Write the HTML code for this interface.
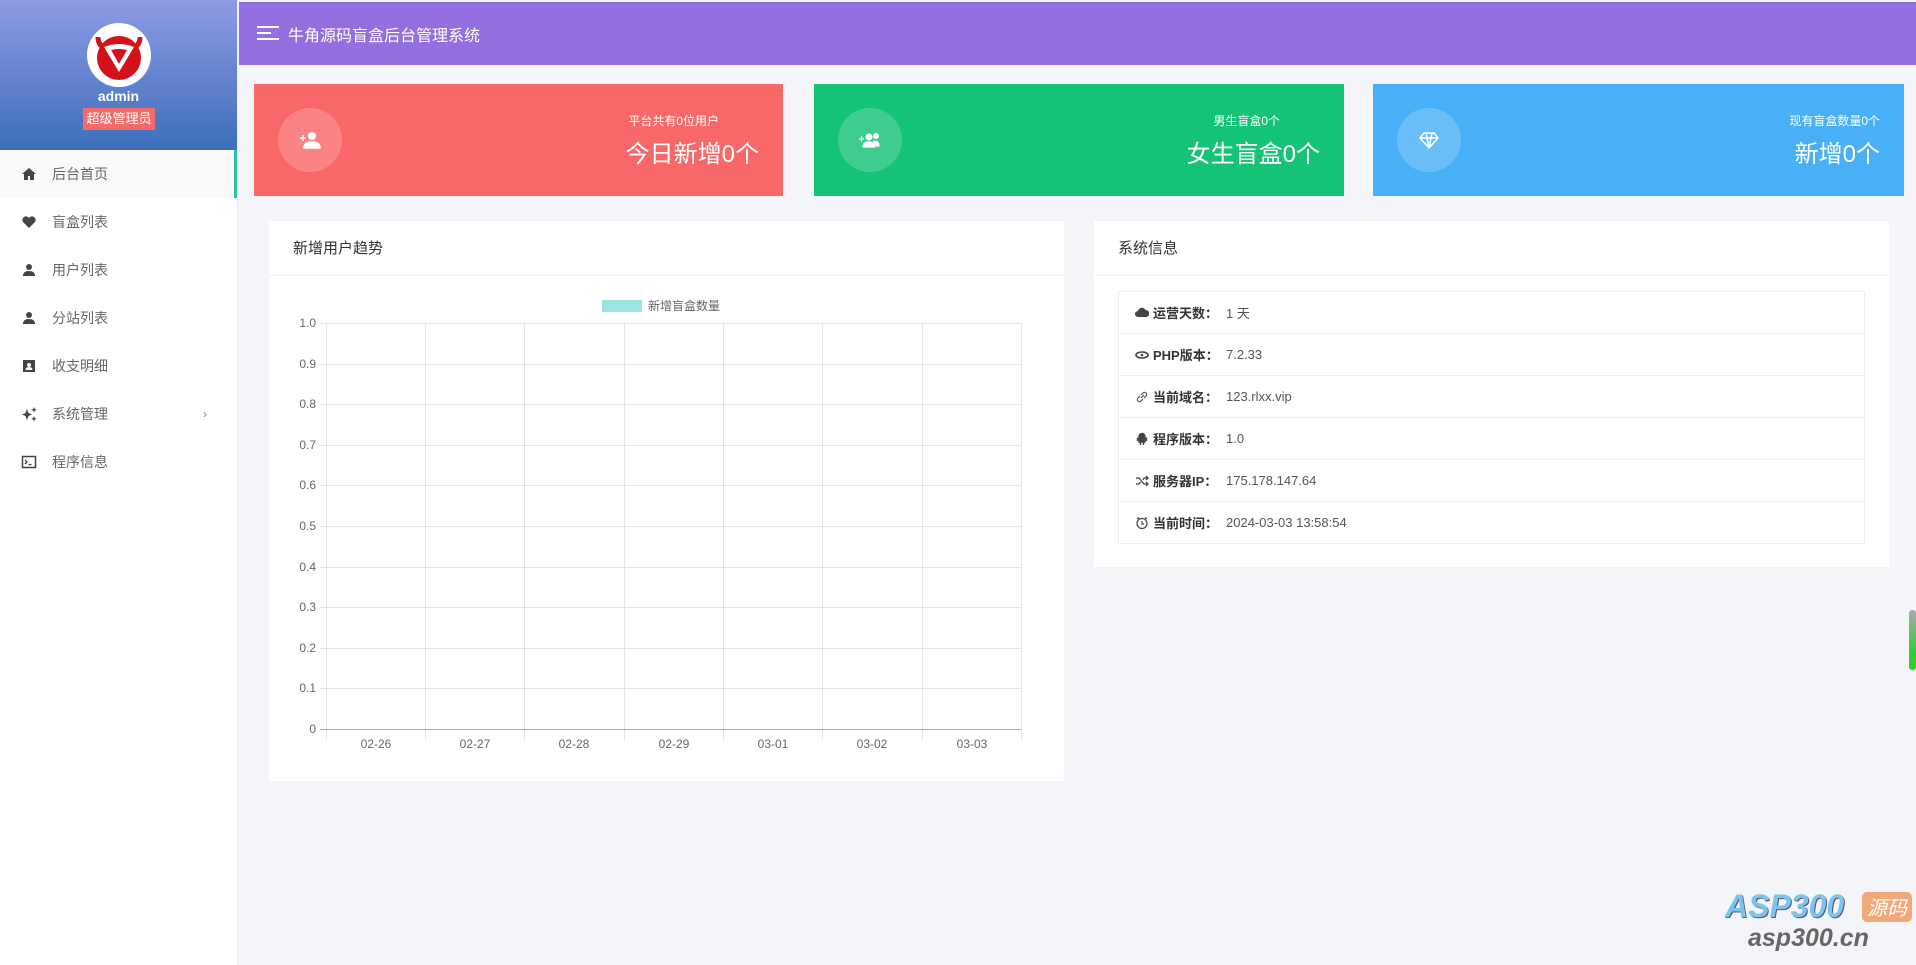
<!DOCTYPE html>
<html><head><meta charset="utf-8"><style>
*{box-sizing:border-box;margin:0;padding:0}
body{width:1916px;height:965px;overflow:hidden;background:#f4f5f9;font-family:"Liberation Sans","Noto Sans CJK SC",sans-serif;color:#333;position:relative}
.side{position:absolute;left:0;top:0;width:238px;height:965px;background:#fff;border-right:1px solid #eee}
.sh{height:150px;background:linear-gradient(#8e9ae3,#3d6fbb);text-align:center;color:#fff;position:relative}
.logo{position:absolute;left:87px;top:23px;width:64px;height:64px;border-radius:50%;background:#fff}
.uname{position:absolute;top:88px;width:100%;font-weight:bold;font-size:14px}
.role{position:absolute;left:83px;top:108px;width:72px;height:22px;background:#f36b6b;font-size:13px;line-height:22px;color:#fff}
.mi{height:48px;display:flex;align-items:center;font-size:14px;color:#666;position:relative}
.mi.act{background:#fafafa;border-right:3px solid #2bc3a3}
.mi svg{position:absolute;left:21px}
.mi span{position:absolute;left:52px}
.top{position:absolute;left:239px;top:2px;width:1677px;height:63px;background:#936fdf;color:#fff;font-size:16px}
.card{position:absolute;top:84px;height:112px;color:#fff}
.circ{position:absolute;left:24px;top:24px;width:64px;height:64px;border-radius:50%;background:rgba(255,255,255,.18)}
.ct{position:absolute;text-align:right}
.panel{position:absolute;background:#fff;top:221px}
.ph{height:55px;border-bottom:1px solid #f0f0f0;font-size:15px;line-height:55px;padding-left:24px;color:#333}
.row{height:42px;border-bottom:1px solid #eee;display:flex;align-items:center;font-size:13px;color:#555;position:relative}
.row b{position:absolute;left:34px;color:#333}
.row i{font-style:normal;position:absolute;left:107px}
.row svg{position:absolute;left:16px}
</style></head><body>
<div class="side">
 <div class="sh">
  <div class="logo"><svg width="64" height="64" viewBox="0 0 64 64"><path d="M11 14q0 10 10 12M53 14q0 10-10 12" stroke="#d3121c" stroke-width="5" fill="none"/><circle cx="32" cy="35" r="22" fill="#d3121c"/><path d="M17 24q15-6 30 0l-15 25z" fill="#fff"/><path d="M24 27q8-2 16 0l-8 14z" fill="#d3121c"/></svg></div>
  <div class="uname">admin</div>
  <div class="role">超级管理员</div>
 </div>
 <div class="mi act"><svg width="16" height="16" viewBox="0 0 16 16"><path d="M8 2L1 8h2v6h4v-4h2v4h4V8h2z" fill="#444"/></svg><span>后台首页</span></div>
 <div class="mi"><svg width="16" height="16" viewBox="0 0 16 16"><path d="M8 14L2 8a3.2 3.2 0 016-4 3.2 3.2 0 016 4z" fill="#444"/></svg><span>盲盒列表</span></div>
 <div class="mi"><svg width="16" height="16" viewBox="0 0 16 16"><circle cx="8" cy="5" r="3" fill="#444"/><path d="M2 14q0-5 6-5t6 5z" fill="#444"/></svg><span>用户列表</span></div>
 <div class="mi"><svg width="16" height="16" viewBox="0 0 16 16"><circle cx="8" cy="5" r="3" fill="#444"/><path d="M2 14q0-5 6-5t6 5z" fill="#444"/></svg><span>分站列表</span></div>
 <div class="mi"><svg width="16" height="16" viewBox="0 0 16 16"><rect x="2" y="2" width="12" height="12" fill="#444"/><circle cx="8" cy="7" r="2" fill="#fff"/><path d="M4.5 12q0-3 3.5-3t3.5 3z" fill="#fff"/></svg><span>收支明细</span></div>
 <div class="mi"><svg width="18" height="16" viewBox="0 0 18 16"><path d="M6 3l1.5 4L11 8.5 7.5 10 6 14 4.5 10 1 8.5 4.5 7z M13 1l.8 2 2 .8-2 .8-.8 2-.8-2-2-.8 2-.8z M13 10l.8 2 2 .8-2 .8-.8 2-.8-2-2-.8 2-.8z" fill="#444"/></svg><span>系统管理</span><span style="left:203px;font-size:12px;color:#888">›</span></div>
 <div class="mi"><svg width="16" height="16" viewBox="0 0 16 16"><rect x="1.5" y="2.5" width="13" height="11" fill="none" stroke="#444" stroke-width="1.5"/><path d="M4 6l2 2-2 2M7.5 10.5h3" stroke="#444" stroke-width="1.3" fill="none"/></svg><span>程序信息</span></div>
</div>
<div class="top"><svg style="position:absolute;left:18px;top:23px" width="22" height="16"><path d="M0 2h22M0 8h14M0 14h22" stroke="#fff" stroke-width="2"/></svg><span style="position:absolute;left:49px;top:20px">牛角源码盲盒后台管理系统</span></div>

<div class="card" style="left:254px;width:529px;background:#f96868"><div class="circ"><svg style="position:absolute;left:20px;top:22px" width="24" height="20" viewBox="0 0 24 20"><circle cx="14" cy="6" r="4" fill="#fff"/><path d="M6 18q0-6 8-6t8 6z M2 8h6M5 5v6" fill="#fff" stroke="#fff" stroke-width="1.5"/></svg></div>
 <div class="ct" style="right:64px;top:28px;font-size:12px">平台共有0位用户</div><div class="ct" style="right:24px;top:50px;font-size:24px">今日新增0个</div></div>
<div class="card" style="left:814px;width:530px;background:#15c377"><div class="circ"><svg style="position:absolute;left:20px;top:22px" width="24" height="20" viewBox="0 0 24 20"><circle cx="11" cy="7" r="3.5" fill="#fff"/><circle cx="18" cy="6" r="3" fill="#fff"/><path d="M5 17q0-5 6-5t6 5zM15 11q6 0 6 5h-3M1 9h5M3.5 6.5v5" fill="#fff" stroke="#fff" stroke-width="1.2"/></svg></div>
 <div class="ct" style="right:64px;top:28px;font-size:12px">男生盲盒0个</div><div class="ct" style="right:24px;top:50px;font-size:24px">女生盲盒0个</div></div>
<div class="card" style="left:1373px;width:531px;background:#48b0f7"><div class="circ"><svg style="position:absolute;left:22px;top:23px" width="20" height="18" viewBox="0 0 20 18"><path d="M5 2h10l4 5-9 10L1 7z M1 7h18M7 2L10 17 13 2" fill="none" stroke="#fff" stroke-width="1.5"/></svg></div>
 <div class="ct" style="right:24px;top:28px;font-size:12px">现有盲盒数量0个</div><div class="ct" style="right:24px;top:50px;font-size:24px">新增0个</div></div>

<div class="panel" style="left:269px;width:795px;height:560px"><div class="ph">新增用户趋势</div></div>
<svg style="position:absolute;left:0;top:0" width="1916" height="965" font-family="Liberation Sans,sans-serif" font-size="12" fill="#666">
 <rect x="602" y="300" width="40" height="12" fill="#9ee3df"/>
 <text x="648" y="310" font-size="12" font-family="Liberation Sans,Noto Sans CJK SC,sans-serif">新增盲盒数量</text>
 <g stroke="#e5e5e5" stroke-width="1">
  <line x1="320" x2="1021" y1="323.5" y2="323.5"/><line x1="320" x2="1021" y1="364.5" y2="364.5"/><line x1="320" x2="1021" y1="404.5" y2="404.5"/><line x1="320" x2="1021" y1="445.5" y2="445.5"/><line x1="320" x2="1021" y1="485.5" y2="485.5"/><line x1="320" x2="1021" y1="526.5" y2="526.5"/><line x1="320" x2="1021" y1="567.5" y2="567.5"/><line x1="320" x2="1021" y1="607.5" y2="607.5"/><line x1="320" x2="1021" y1="648.5" y2="648.5"/><line x1="320" x2="1021" y1="688.5" y2="688.5"/>
  <line x1="326.5" x2="326.5" y1="323" y2="740"/><line x1="425.5" x2="425.5" y1="323" y2="740"/><line x1="524.5" x2="524.5" y1="323" y2="740"/><line x1="624.5" x2="624.5" y1="323" y2="740"/><line x1="723.5" x2="723.5" y1="323" y2="740"/><line x1="822.5" x2="822.5" y1="323" y2="740"/><line x1="922.5" x2="922.5" y1="323" y2="740"/><line x1="1021.5" x2="1021.5" y1="323" y2="740"/>
 </g>
 <line x1="320" x2="1021" y1="729.5" y2="729.5" stroke="#aaa"/>
 <g text-anchor="end"><text x="316" y="327">1.0</text><text x="316" y="368">0.9</text><text x="316" y="408">0.8</text><text x="316" y="449">0.7</text><text x="316" y="489">0.6</text><text x="316" y="530">0.5</text><text x="316" y="571">0.4</text><text x="316" y="611">0.3</text><text x="316" y="652">0.2</text><text x="316" y="692">0.1</text><text x="316" y="733">0</text></g>
 <g text-anchor="middle"><text x="376" y="748">02-26</text><text x="475" y="748">02-27</text><text x="574" y="748">02-28</text><text x="674" y="748">02-29</text><text x="773" y="748">03-01</text><text x="872" y="748">03-02</text><text x="972" y="748">03-03</text></g>
</svg>

<div class="panel" style="left:1094px;width:795px;height:346px"><div class="ph">系统信息</div>
 <div style="position:absolute;left:24px;top:70px;width:747px;border:1px solid #eee;border-bottom:none">
  <div class="row"><svg width="14" height="14" viewBox="0 0 14 14"><path d="M3 11a3 3 0 010-6 4 4 0 017.5-1A3 3 0 0111 11z" fill="#444"/></svg><b>运营天数：</b><i>1 天</i></div>
  <div class="row"><svg width="14" height="14" viewBox="0 0 14 14"><ellipse cx="7" cy="7" rx="6" ry="3" fill="none" stroke="#444" stroke-width="1.6"/><circle cx="7" cy="7" r="1.3" fill="#444"/></svg><b>PHP版本：</b><i>7.2.33</i></div>
  <div class="row"><svg width="14" height="14" viewBox="0 0 14 14"><path d="M6 8l3-3M5 6L3 8a2 2 0 003 3l2-2M9 8l2-2a2 2 0 00-3-3L6 5" stroke="#555" stroke-width="1.2" fill="none"/></svg><b>当前域名：</b><i>123.rlxx.vip</i></div>
  <div class="row"><svg width="14" height="14" viewBox="0 0 14 14"><path d="M4 5h6v5H4zM4 4.5a3 3 0 016 0zM2.5 5.5v3.5M11.5 5.5v3.5M5.5 10v3M8.5 10v3" stroke="#444" fill="#444" stroke-width="1.4"/></svg><b>程序版本：</b><i>1.0</i></div>
  <div class="row"><svg width="14" height="14" viewBox="0 0 14 14"><path d="M1 4h3l5 6h3M1 10h3l1.5-2M8 6l1-2h3M11 2l2 2-2 2M11 8l2 2-2 2" stroke="#444" stroke-width="1.3" fill="none"/></svg><b>服务器IP：</b><i>175.178.147.64</i></div>
  <div class="row"><svg width="14" height="14" viewBox="0 0 14 14"><circle cx="7" cy="7.5" r="5" fill="none" stroke="#444" stroke-width="1.2"/><path d="M7 5v3h2M2 3l2-1.5M12 3l-2-1.5" stroke="#444" stroke-width="1.2" fill="none"/></svg><b>当前时间：</b><i>2024-03-03 13:58:54</i></div>
 </div>
</div>
<div style="position:absolute;left:1909px;top:610px;width:7px;height:60px;background:linear-gradient(#aaa,#3c3 70%);border-radius:3px"></div>
<div style="position:absolute;left:1725px;top:888px;font:italic bold 32px 'Liberation Sans',sans-serif;color:#7cc4ee;text-shadow:1px 1px 0 #557">ASP300</div>
<div style="position:absolute;left:1862px;top:892px;width:50px;height:30px;background:#f2a878;border-radius:5px;color:#fff;font:italic 20px 'Noto Sans CJK SC',sans-serif;text-align:center;line-height:30px">源码</div>
<div style="position:absolute;left:1748px;top:924px;font:italic bold 25px 'Liberation Sans',sans-serif;color:#666">asp300.cn</div>
</body></html>
